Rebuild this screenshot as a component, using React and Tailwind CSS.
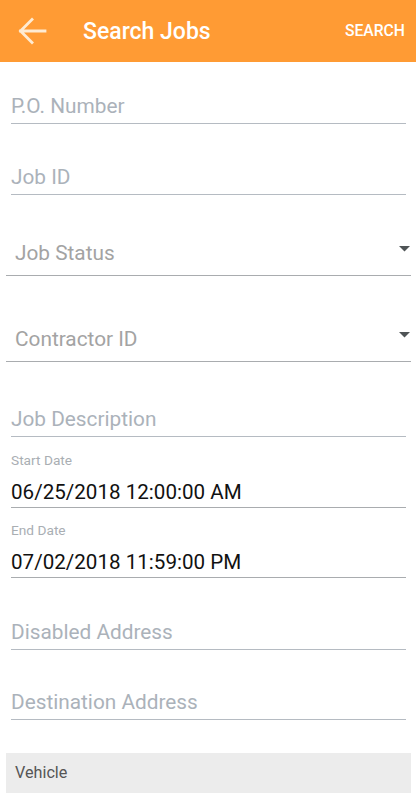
import React from "react";

const font = { fontFamily: "Roboto, 'Noto Sans', sans-serif" };

function TextField({ label, h }) {
  return (
    <div
      className={`ml-[11px] mr-[10px] flex items-end border-b border-[#b5bbc2] pb-[5px] ${h}`}
    >
      <span className="text-[20.8px] leading-[24px] text-[#abb2ba]">{label}</span>
    </div>
  );
}

function Picker({ label, h }) {
  return (
    <div
      className={`ml-[6px] mr-[5px] flex items-end justify-between border-b border-[#a9acaf] pb-[10px] pl-[9px] ${h}`}
    >
      <span className="text-[20.8px] leading-[24px] text-[#a3a3a3]">{label}</span>
      <svg width="11" height="6" viewBox="0 0 11 6" className="mb-[13px] mr-[1px]">
        <polygon points="0,0 11,0 5.5,5.5" fill="#4f5456" />
      </svg>
    </div>
  );
}

function DateField({ label, value, h }) {
  return (
    <div
      className={`ml-[11px] mr-[10px] flex flex-col justify-end border-b border-[#a9acaf] pb-[3px] ${h}`}
    >
      <span className="mb-[12px] text-[13.7px] leading-[16px] text-[#a9aeb3]">{label}</span>
      <span className="text-[20.6px] leading-[24px] text-[#111111]">{value}</span>
    </div>
  );
}

export default function App() {
  return (
    <div className="min-h-[800px] w-[416px] bg-white" style={font}>
      <div className="flex h-[62px] items-center bg-[#ff9b34] pr-[11px]">
        <svg width="30" height="30" viewBox="0 0 30 30" className="ml-[17px]">
          <path
            d="M28 15H3.5M15 3.5L3.5 15L15 26.5"
            stroke="#feebd2"
            strokeWidth="2.8"
            fill="none"
            strokeLinecap="square"
          />
        </svg>
        <span className="ml-[36px] text-[23px] font-medium leading-none text-white">
          Search Jobs
        </span>
        <span className="ml-auto text-[15.7px] font-medium leading-none text-white">
          SEARCH
        </span>
      </div>
      <TextField label="P.O. Number" h="h-[62px]" />
      <TextField label="Job ID" h="h-[71px]" />
      <Picker label="Job Status" h="h-[81px]" />
      <Picker label="Contractor ID" h="h-[86px]" />
      <TextField label="Job Description" h="h-[75px]" />
      <DateField label="Start Date" value="06/25/2018 12:00:00 AM" h="h-[71px]" />
      <DateField label="End Date" value="07/02/2018 11:59:00 PM" h="h-[70px]" />
      <TextField label="Disabled Address" h="h-[72px]" />
      <TextField label="Destination Address" h="h-[70px]" />
      <div className="ml-[6px] mr-[5px] mt-[33px] flex h-[40px] items-center bg-[#ececec] pl-[9px]">
        <span className="text-[16.2px] leading-none text-[#555555]">Vehicle</span>
      </div>
    </div>
  );
}
